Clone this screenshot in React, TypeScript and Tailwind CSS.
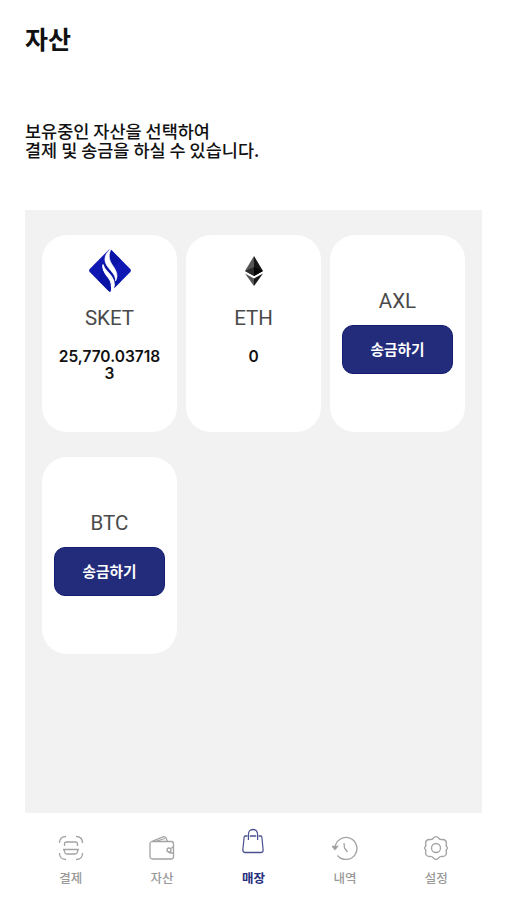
import type { ReactNode } from 'react';

type Asset = {
  symbol: string;
  icon?: ReactNode;
  balance?: string;
};

function SketLogo() {
  return (
    <svg width="44" height="48" viewBox="0 0 44 48">
      <path
        d="M20.5 3Q22 1.8 23.5 3L42.3 22Q43.5 23.500 42.3 25L23.5 44Q22 45.2 20.5 44L1.7 25Q.5 23.5 1.7 22Z"
        fill="#1018b4"
      />
      <path d="M22 2L33 13L25 20L33 34L22 45L10 33L15 20Z" fill="#0914a6" />
      <path
        d="M23.5 1C16.5 7 15 13 19.5 19.5C23.500 25 28 28 27.5 34C30.500 29 28.5 24 25 19C20.5 12.5 20 8 23.5 1Z"
        fill="#fff"
        stroke="#fff"
        strokeWidth=".7"
      />
      <path
        d="M15 17.5C14 22 16.500 26 20 30C24 35 24.5 40 23 46.5C27 41 27.500 35.5 23.5 29.5C20 24.500 16 23 15 17.5Z"
        fill="#fff"
        stroke="#fff"
        strokeWidth="1.2"
      />
    </svg>
  );
}

function EthLogo() {
  return (
    <svg width="20" height="32" viewBox="0 0 20 32">
      <path d="M10 1L1 16L10 21Z" fill="#555" />
      <path d="M10 1L19 16L10 21Z" fill="#151515" />
      <path d="M1 16L10 12L10 21Z" fill="#2c2c2c" />
      <path d="M19 16L10 12L10 21Z" fill="#050505" />
      <path d="M1 18.5L10 23.5V31Z" fill="#555" />
      <path d="M19 18.5L10 23.5V31Z" fill="#181818" />
    </svg>
  );
}

const assets: Asset[] = [
  { symbol: 'SKET', icon: <SketLogo />, balance: '25,770.037183' },
  { symbol: 'ETH', icon: <EthLogo />, balance: '0' },
  { symbol: 'AXL' },
  { symbol: 'BTC' },
];

const menus = [
  {
    label: '결제',
    icon: (
      <>
        <path d="M1.5 8Q1.5 1.5 8 1.5M18 1.5Q24.5 1.5 24.5 8M24.5 18Q24.5 24.5 18 24.5M8 24.5Q1.5 24.5 1.5 18" />
        <path d="M6.500 11V9Q6.5 7 8.500 7H17.500Q19.5 7 19.500 9V11M5 14.5H21M6 14.5L7 18Q7.500 19 9 19H17Q18.5 19 19 18L20 14.5" />
      </>
    ),
  },
  {
    label: '자산',
    icon: (
      <>
        <path d="M3 6.5H22Q24.5 6.5 24.5 9V21.5Q24.5 24 22 24H3.5Q1 24 1 21.5V8.5Q1 7 2.5 6.5L14 1.8Q16 1 17 3L18.5 6.5M6 6.5L16 3.5" />
        <path d="M24.500 12Q23 12 22.500 13.5M24.5 18H23Q20.5 18 19.500 17" />
        <circle cx="20" cy="15" r="2" />
      </>
    ),
  },
  {
    label: '매장',
    active: true,
    icon: (
      <>
        <path d="M7 8H4.5Q3.5 8 3.400 9L2 22Q2 24.500 4.500 24.5H21.5Q24 24.5 24 22L22.6 9Q22.500 8 21.500 8H19M9.500 8H16.500" />
        <path d="M8 12V7Q8 1.5 13 1.5T18 7V12" />
      </>
    ),
  },
  {
    label: '내역',
    icon: (
      <>
        <path d="M3 12.5A11 11 0 1 1 5.5 20.500M12 8L12.500 13L15.5 17" />
        <path d="M.5 11.500H5.500L3 14.5Z" fill="currentColor" />
      </>
    ),
  },
  {
    label: '설정',
    icon: (
      <>
        <path d="M10.5 3Q13 .2 15.5 3Q17 5 19.5 4.5Q23 4.500 23.5 8Q22.500 11 24 12Q25 13 24 14Q22.500 15 23.5 18Q23 21.500 19.5 21.5Q17 21 15.5 23Q13 25.8 10.5 23Q9 21 6.5 21.5Q3 21.500 2.5 18Q3.500 15 2 14Q1 13 2 12Q3.500 11 2.5 8Q3 4.500 6.5 4.5Q9 5 10.5 3Z" />
        <circle cx="13" cy="13" r="4.5" />
      </>
    ),
  },
];

function AssetCard({ symbol, icon, balance }: Asset) {
  return (
    <div className="flex h-[197px] flex-col items-center rounded-[25px] bg-white px-3">
      {icon ? (
        <div className="mt-[13px] flex h-[46px] items-center">{icon}</div>
      ) : (
        <div className="h-[42px]" />
      )}
      <p className="mt-[9px] font-['Roboto'] text-[20.5px] leading-[30px] text-[#4a4a4a]">{symbol}</p>
      {balance ? (
        <p className="mt-[15px] w-[105px] break-all text-center font-['Inter'] text-[15.5px] font-semibold leading-[17px] text-[#111]">
          {balance}
        </p>
      ) : (
        <button className="mt-[9px] h-[49px] w-[111px] rounded-[11px] border border-[#151d72] bg-[#222c7b] pb-px text-[14.7px] font-bold text-white">
          송금하기
        </button>
      )}
    </div>
  );
}

export default function App() {
  return (
    <div className="flex h-[900px] w-[506px] flex-col bg-white px-[25px] font-['Noto_Sans_CJK_KR',sans-serif]">
      <h1 className="mt-[19px] text-[25px] font-bold leading-[38px] text-[#111]">자산</h1>
      <p className="mt-[64px] text-[17.5px] font-medium leading-[19px] text-[#111]">
        보유중인 자산을 선택하여
        <br />
        결제 및 송금을 하실 수 있습니다.
      </p>

      <main className="mt-[51px] grid h-[603px] w-[457px] shrink-0 grid-cols-3 content-start gap-x-[9px] gap-y-[25px] bg-[#f2f2f2] px-[17px] py-[25px]">
        {assets.map((asset) => (
          <AssetCard key={asset.symbol} {...asset} />
        ))}
      </main>

      <nav className="grid w-[457px] grid-cols-5">
        {menus.map(({ label, icon, active }) => (
          <button
            key={label}
            className={`flex flex-col items-center ${active ? 'pt-[15px] text-[#252d7d]' : 'pt-[22px] text-[#999]'}`}
          >
            <svg
              width={active ? 24 : 26}
              height="26"
              viewBox="0 0 26 26"
              preserveAspectRatio="none"
              fill="none"
              stroke={active ? '#4a5090' : '#a3a3a3'}
              strokeWidth="1.3"
            >
              {icon}
            </svg>
            <span
              className={`text-[12.5px] leading-[18px] ${active ? 'mt-[15px] font-bold' : 'mt-[8px] font-medium'}`}
            >
              {label}
            </span>
          </button>
        ))}
      </nav>
    </div>
  );
}
